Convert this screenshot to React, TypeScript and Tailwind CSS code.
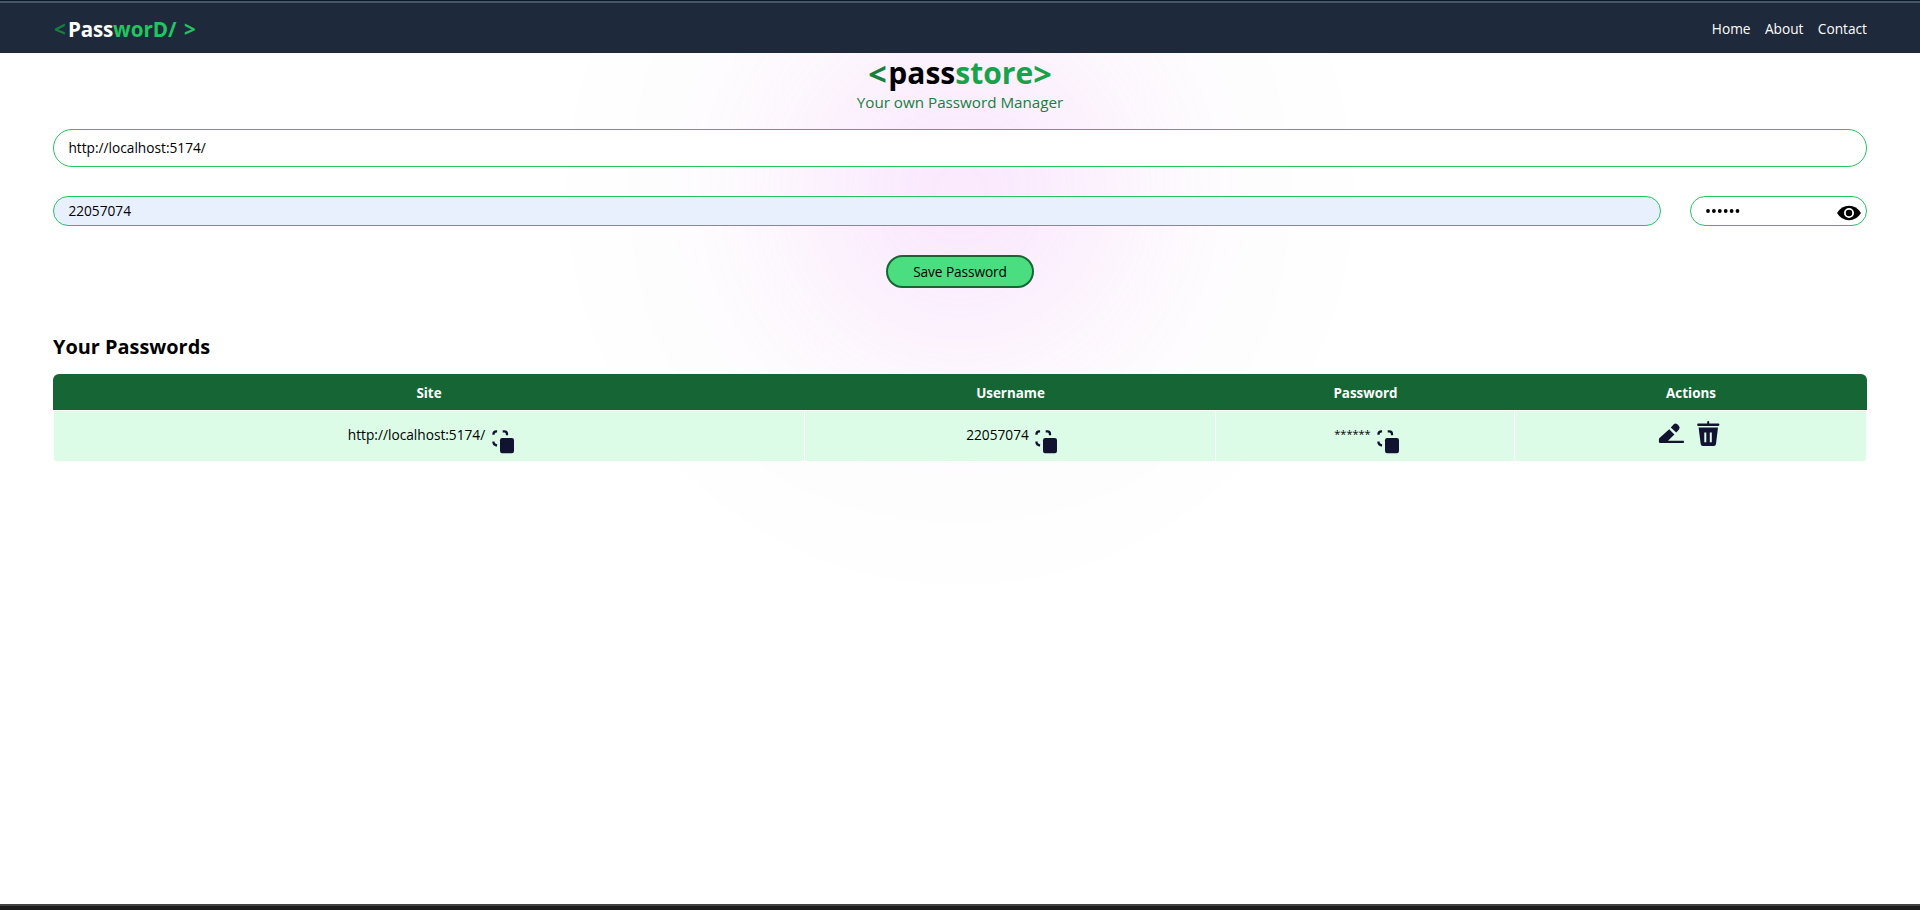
import React from "react";

function CopyIcon() {
  return (
    <svg className="h-6 w-[22px] shrink-0" viewBox="0 0 22 24" fill="none">
      <path d="M1.5 4.8V4.1Q1.5 1.4 4.2 1.4H5.1M10.7 1.4H12.4Q15 1.4 15 4.1V5.3M1.5 11.5V12.7Q1.7 14.7 5 15.7" stroke="#121331" strokeWidth="2.3" />
      <rect x="8" y="8" width="14" height="15.2" rx="2.2" fill="#121331" />
    </svg>
  );
}

function EditIcon() {
  return (
    <svg className="h-[27px] w-[27px] shrink-0" viewBox="0 0 27 27" fill="#121331">
      <path d="M11.2 9.3L16.4 14.5L10 20.8H25.6Q26.6 21.8 25.6 23H2.2Q.9 23 .9 21.7V19.4Q.9 18.7 1.5 18.1Z" />
      <path d="M12.8 7.6L15.6 4.4Q17.4 2.6 19.2 4.2L21 6Q22.4 7.8 20.8 9.8L18.2 12.6Z" />
    </svg>
  );
}

function TrashIcon() {
  return (
    <svg className="h-[27px] w-[23px] shrink-0" viewBox="0 0 23 27" fill="#121331">
      <path d="M1.2 3.6H10.2V2Q10.2 1 11.2 1T12.2 2V3.6H21.4Q22.4 3.6 22.4 4.7T21.4 5.9H1.2Q.2 5.9 .2 4.7T1.2 3.6Z" />
      <path fillRule="evenodd" d="M1.6 7.6H21L19 24Q18.7 26 16.8 26H5.9Q4 26 3.7 24ZM7.3 12.5V22.2H9.3V12.5ZM12.8 12.5V22.2H14.8V12.5Z" />
    </svg>
  );
}

function EyeIcon() {
  return (
    <svg className="h-4 w-6 shrink-0" viewBox="0 0 24 16">
      <path d="M0 8Q4.5 .7 12 .7T24 8Q19.5 15.3 12 15.3T0 8Z" fill="#000" />
      <circle cx="12" cy="8" r="4.1" fill="none" stroke="#fff" strokeWidth="1.8" />
      <circle cx="12" cy="8" r="2.5" fill="#000" />
    </svg>
  );
}

const headings = ["Site", "Username", "Password", "Actions"];

export default function App() {
  return (
    <div className="relative isolate flex h-[910px] flex-col overflow-hidden bg-white font-['Open_Sans','Noto_Sans',sans-serif] text-[13.7px] leading-[21.6px] text-black">
      <div className="absolute left-[567px] top-[-201px] -z-20 size-[786px] rounded-full bg-[#fefefe]" />
      <div className="absolute left-[800px] top-[32px] -z-10 size-[320px] rounded-full bg-[#e879f9] opacity-20 blur-[98px]" />

      <nav className="h-[53px] shrink-0 border-t border-[#0f172a] bg-[#1e293b] text-white">
        <div className="flex h-[52px] items-center justify-between border-t-2 border-[#475569] px-[53px]">
          <div className="flex whitespace-pre pl-px pt-[3px] text-[20.6px] font-bold">
            <span className="w-[14px] text-[#15803d]">&lt;</span>
            <span className="tracking-[-0.2px]">Pass</span>
            <span className="text-[#22c55e]">worD/ </span>
            <span className="pl-[2px] text-[#22c55e]">&gt;</span>
          </div>
          <ul className="flex gap-[14.4px] pt-px">
            <li>Home</li>
            <li>About</li>
            <li>Contact</li>
          </ul>
        </div>
      </nav>

      <main className="flex flex-1 flex-col px-[53px]">
        <h1 className="mt-[2px] flex h-9 items-center justify-center text-[30px] font-bold leading-[36px]">
          <span className="w-5 text-[32.4px] text-[#15803d]">&lt;</span>
          <span>pass</span>
          <span className="text-[#16a34a]">store</span>
          <span className="text-[32.4px] text-[#16a34a]">&gt;</span>
        </h1>
        <p className="mt-px text-center text-[15.2px] leading-[20px] text-[#15803d]">Your own Password Manager</p>

        <div className="mt-[17px] flex h-[38px] items-center rounded-full border border-[#22c55e] bg-white px-[14.4px]">http://localhost:5174/</div>
        <div className="mt-[29px] flex h-[30px] gap-[29px]">
          <div className="flex flex-1 items-center rounded-full border border-[#22c55e] bg-[#e8f0fe] px-[14.4px]">22057074</div>
          <div className="flex w-[177px] items-center justify-between rounded-full border border-[#22c55e] bg-white pl-[15px] pr-[5px]">
            <svg className="h-1 w-[34px]" viewBox="0 0 34 4">
              {[2, 7.9, 13.8, 19.7, 25.6, 31.5].map((x) => (
                <circle key={x} cx={x} cy="2" r="1.9" />
              ))}
            </svg>
            <div className="pt-[3px]"><EyeIcon /></div>
          </div>
        </div>
        <button className="mt-[29px] h-[33px] w-[148px] self-center rounded-full border-2 border-[#166534] bg-[#4ade80] pt-px tracking-[-0.1px]">Save Password</button>

        <h2 className="mt-[44px] text-[19.9px] font-bold leading-[29px]">Your Passwords</h2>

        <div className="mt-[13px] overflow-hidden rounded-md">
          <div className="grid h-9 grid-cols-[752px_411px_299px_1fr] items-center bg-[#166534] pt-[3px] text-center text-[13.4px] font-bold text-white">
            {headings.map((h) => (
              <div key={h}>{h}</div>
            ))}
          </div>
          <div className="grid h-[52px] grid-cols-[751px_411px_299px_1fr] divide-x divide-white border border-white bg-[#dcfce7]">
            <div className="flex justify-center pl-1 pt-[13px]">
              <span>http://localhost:5174/</span>
              <span className="ml-[7px] mt-[6px]"><CopyIcon /></span>
            </div>
            <div className="flex justify-center pl-[3px] pt-[13px]">
              <span>22057074</span>
              <span className="ml-[6px] mt-[6px]"><CopyIcon /></span>
            </div>
            <div className="flex justify-center pl-[3px] pt-[13px]">
              <span className="-mt-px text-[11px]">******</span>
              <span className="ml-[6px] mt-[6px]"><CopyIcon /></span>
            </div>
            <div className="flex justify-center gap-3 pr-[3px] pt-[9px]">
              <EditIcon />
              <TrashIcon />
            </div>
          </div>
        </div>
      </main>

      <footer className="h-[6px] shrink-0 border-t-2 border-[#414141] bg-[#1c1c1c]" />
    </div>
  );
}
